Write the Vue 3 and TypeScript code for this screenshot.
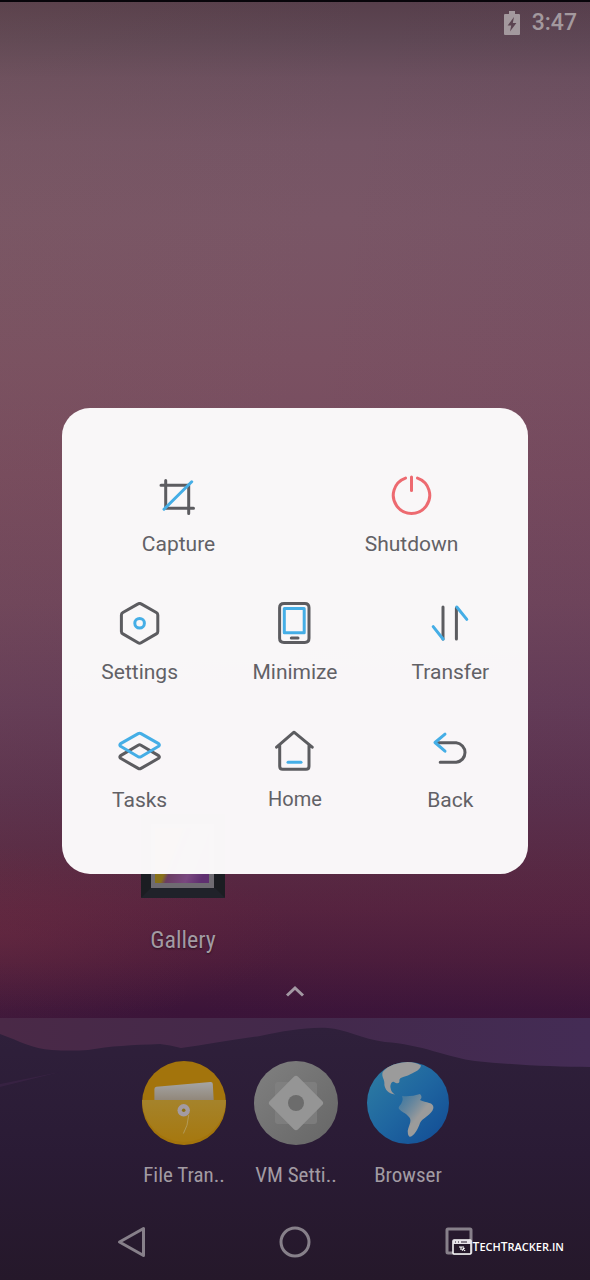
<script setup lang="ts">
interface Action {
  id: string
  label: string
}

const topActions: Action[] = [
  { id: 'capture', label: 'Capture' },
  { id: 'shutdown', label: 'Shutdown' },
]

const gridActions: Action[] = [
  { id: 'settings', label: 'Settings' },
  { id: 'minimize', label: 'Minimize' },
  { id: 'transfer', label: 'Transfer' },
  { id: 'tasks', label: 'Tasks' },
  { id: 'home', label: 'Home' },
  { id: 'back', label: 'Back' },
]

interface Stroke {
  d: string
  tone: 'ink' | 'sky' | 'alert'
}

const strokes: Record<string, Stroke[]> = {
  capture: [
    { d: 'M8.7 6.5V34.3H36.5M4 11.3H31.7V39.5', tone: 'ink' },
    { d: 'M7 35.2L34.7 7.8', tone: 'sky' },
  ],
  shutdown: [
    { d: 'M27.5 4.1A18.2 18.2 0 1 1 15.5 4.1', tone: 'alert' },
    { d: 'M21.5 3V16.5', tone: 'alert' },
  ],
  settings: [
    { d: 'M20.1 1.9Q21.6 1 23.1 1.9L38.3 10.5Q39.8 11.4 39.8 13V29.4Q39.8 31 38.3 31.9L23.1 40.7Q21.6 41.6 20.1 40.7L4.9 31.9Q3.4 31 3.4 29.4V13Q3.4 11.4 4.9 10.5Z', tone: 'ink' },
    { d: 'M21.6 16.5a4.8 4.8 0 1 1 0 9.6a4.8 4.8 0 1 1 0-9.6Z', tone: 'sky' },
  ],
  minimize: [
    { d: 'M11 1.6H31.8Q36 1.6 36 5.8V36.2Q36 40.4 31.8 40.4H11Q6.6 40.4 6.6 36.2V5.8Q6.6 1.6 11 1.6Z', tone: 'ink' },
    { d: 'M11.3 6.6H31.2V30.8H11.3Z', tone: 'sky' },
    { d: 'M18.3 36H25', tone: 'ink' },
  ],
  transfer: [
    { d: 'M15 5V37M28.4 6V37', tone: 'ink' },
    { d: 'M5.2 24.6L15.2 37.2M28.8 5L38.8 17.4', tone: 'sky' },
  ],
  tasks: [
    { d: 'M20.2 15.2Q21.6 14.4 23 15.2L40.6 25.6Q42.2 27 40.6 28.3L23 38.4Q21.6 39.2 20.2 38.4L2.6 28.3Q1 27 2.6 25.6Z', tone: 'ink' },
    { d: 'M20.2 3.6Q21.6 2.8 23 3.6L40.6 13.6Q42.2 15 40.6 16.3L23 26.7Q21.6 27.5 20.2 26.7L2.6 16.3Q1 15 2.6 13.6Z', tone: 'sky' },
  ],
  home: [
    { d: 'M3.6 17.2L21 2.2L39.2 17.2M6.7 15V36.3Q6.7 39.3 9.7 39.3H33Q36 39.3 36 36.3V15', tone: 'ink' },
    { d: 'M15 32.3H28', tone: 'sky' },
  ],
  back: [
    { d: 'M9 12.8H28.2A9.8 9.8 0 0 1 28.2 32.3H12.2', tone: 'ink' },
    { d: 'M17 4.2L7 12.5L17 21.2', tone: 'sky' },
  ],
}

const dockApps: Action[] = [
  { id: 'files', label: 'File Tran..' },
  { id: 'vm', label: 'VM Setti..' },
  { id: 'browser', label: 'Browser' },
]
</script>

<template>
  <div class="screen">
    <header class="status">
      <svg class="battery" viewBox="0 0 16 24" aria-label="Charging">
        <path fill-rule="evenodd" d="M5 0H11V3H15Q16 3 16 4V23Q16 24 15 24H1Q0 24 0 23V4Q0 3 1 3H5ZM10 6L3.600 14.600H7.200L6 20.500L12.400 12H8.800Z" />
      </svg>
      <time class="clock">3:47</time>
    </header>

    <main class="workspace">
      <a class="app gallery" href="#gallery">
        <svg class="app-icon" viewBox="0 0 84 84" aria-hidden="true">
          <defs>
            <linearGradient id="photo" x1="0" y1=".2" x2="1" y2=".6">
              <stop offset="0" stop-color="#8a7414" />
              <stop offset=".36" stop-color="#87701a" />
              <stop offset=".44" stop-color="#6a3d62" />
              <stop offset=".75" stop-color="#79477f" />
              <stop offset="1" stop-color="#5f2f70" />
            </linearGradient>
          </defs>
          <rect width="84" height="84" rx="1" fill="#1b1d22" />
          <path d="M0 84L10 74H74L84 84Z" fill="#20222a" />
          <rect x="10" y="10" width="63" height="64" fill="#6f6b72" />
          <rect x="14" y="14" width="54" height="55" fill="url(#photo)" />
        </svg>
        <span class="app-label">Gallery</span>
      </a>
      <button class="drawer" aria-label="All apps">
        <svg viewBox="0 0 24 12"><path d="M4 10.500L12 3L20 10.500" /></svg>
      </button>
    </main>

    <footer class="bottom">
      <svg class="hills" viewBox="0 0 590 262" preserveAspectRatio="none" aria-hidden="true">
        <defs>
          <linearGradient id="land" x1="0" y1="0" x2="0" y2="1">
            <stop offset="0" stop-color="#2f203b" />
            <stop offset=".5" stop-color="#2a1b35" />
            <stop offset="1" stop-color="#25182a" />
          </linearGradient>
        </defs>
        <path fill="url(#land)" d="M0 16C20 23 32 31 52 32Q70 33 88 32C110 28 132 27 160 26Q170 27 181 30C205 27 230 22 260 18C285 13 305 9 328 10C345 11 362 21 385 24C420 26 450 40 475 43C515 47 555 49 590 49V262H0Z" />
        <path fill="#3d2549" opacity=".6" d="M0 66L60 54L0 69Z" />
      </svg>
      <nav class="dock" aria-label="Favourite apps">
        <a v-for="app in dockApps" :key="app.id" class="app" :href="`#${app.id}`">
          <svg v-if="app.id === 'files'" class="app-icon" viewBox="0 0 84 84" aria-hidden="true">
            <defs>
              <linearGradient id="flap" x1="0" y1="0" x2="0" y2="1">
                <stop offset="0" stop-color="#a5832b" />
                <stop offset="1" stop-color="#a6780f" />
              </linearGradient>
              <linearGradient id="sheet" x1="0" y1="0" x2="0" y2="1">
                <stop offset="0" stop-color="#a5a5a5" />
                <stop offset="1" stop-color="#91877a" />
              </linearGradient>
            </defs>
            <circle cx="42" cy="42" r="42" fill="#a3740c" />
            <path fill="url(#sheet)" d="M12.400 28Q12.400 26 14.400 25.800L68.500 21Q70.700 20.800 70.800 23L71.700 39H12.400Z" />
            <path fill="url(#flap)" d="M0 39H84A42 42 0 0 1 0 39Z" />
            <path d="M46.700 54Q46 65 41.400 72.500" fill="none" stroke="#b39a58" stroke-width="1" />
            <circle cx="41.700" cy="49.300" r="6.200" fill="#a39ba3" />
            <circle cx="41.700" cy="49.300" r="1.800" fill="#8b7015" />
          </svg>
          <svg v-else-if="app.id === 'vm'" class="app-icon" viewBox="0 0 84 84" aria-hidden="true">
            <defs>
              <linearGradient id="steel" x1="0" y1="0" x2="1" y2="1">
                <stop offset="0" stop-color="#808080" />
                <stop offset="1" stop-color="#666666" />
              </linearGradient>
            </defs>
            <circle cx="42" cy="42" r="42" fill="url(#steel)" />
            <rect x="21" y="21" width="42" height="42" rx="3" fill="#828282" opacity=".75" />
            <rect x="22" y="22" width="40" height="40" rx="3" transform="rotate(45 42 42)" fill="#959595" />
            <circle cx="42" cy="42" r="8" fill="#6c6c6c" />
          </svg>
          <svg v-else class="app-icon" viewBox="0 0 84 84" aria-hidden="true">
            <defs>
              <linearGradient id="ocean" x1="0" y1="0" x2="1" y2="1">
                <stop offset="0" stop-color="#2f7fa3" />
                <stop offset=".5" stop-color="#1f66a0" />
                <stop offset="1" stop-color="#114a94" />
              </linearGradient>
              <linearGradient id="coast" x1="0" y1="0" x2="1" y2="1">
                <stop offset="0" stop-color="#4c7fa0" stop-opacity=".6" />
                <stop offset=".55" stop-color="#9b9b9b" />
              </linearGradient>
            </defs>
            <circle cx="42" cy="42" r="41" fill="url(#ocean)" />
            <path fill="#9b9b9b" d="M16.700 11C20 7 26 2 41.700 1Q50 1 55 4.500C54 10 46 12 43 14C38 16 34 16 33.400 19C34 23 31 23 28 21C25 20 24 25 24.600 27Q25 31 29 33.500C22 33 19 28 18.400 24C19 18 15 16 16.700 11Z" />
            <path fill="url(#coast)" d="M36 35Q45 36 54 33Q57 36 54 39C60 42 68 41 67.400 47C66 54 56 57 54 62C52 68 49 73 46 75Q42 78 41.700 70C43 63 47 59 42 55C39 51 30 49 33.400 45Q38 40 36 35Z" />
          </svg>
          <span class="app-label">{{ app.label }}</span>
        </a>
      </nav>
      <nav class="navbar" aria-label="System">
        <button aria-label="Back"><svg viewBox="0 0 34 34"><path d="M28.500 3.500V30.500L4.500 17Z" /></svg></button>
        <button aria-label="Home"><svg viewBox="0 0 34 34"><circle cx="17" cy="17" r="14" /></svg></button>
        <button aria-label="Recent apps"><svg viewBox="0 0 34 34"><rect x="6" y="4" width="24" height="24" rx="1" /></svg></button>
      </nav>
    </footer>

    <div class="overlay">
      <section class="panel" role="dialog" aria-label="Virtual machine menu">
        <div class="row two">
          <button v-for="a in topActions" :key="a.id" class="action">
            <svg class="glyph" viewBox="0 0 44 44" aria-hidden="true">
              <path v-for="(s, i) in strokes[a.id]" :key="i" :d="s.d" :class="s.tone" />
            </svg>
            <span>{{ a.label }}</span>
          </button>
        </div>
        <div class="row three">
          <button v-for="a in gridActions" :key="a.id" class="action" :class="a.id">
            <svg class="glyph" viewBox="0 0 44 44" aria-hidden="true">
              <path v-for="(s, i) in strokes[a.id]" :key="i" :d="s.d" :class="s.tone" />
            </svg>
            <span>{{ a.label }}</span>
          </button>
        </div>
      </section>
    </div>

    <div class="watermark">
      <svg viewBox="0 0 20 16" aria-hidden="true">
        <rect x="1" y="1" width="18" height="14" rx="1" fill="#25182a" stroke="#fff" stroke-width="1.500" />
        <path d="M1 1H19V5H1Z" fill="#e8e4ea" />
        <path d="M3 3H4M6 3H7M9 3H15" stroke="#25182a" stroke-width="1" />
        <path d="M7 8H12M9 8V11M11 9L13 12M10 11.500L12.500 9" stroke="#fff" stroke-width="1.200" fill="none" />
      </svg>
      <span class="brand"><b>T</b>ech<b>T</b>racker.in</span>
    </div>
  </div>
</template>

<style>
html,
body {
  background: #25182a;
}
</style>

<style scoped>
.screen {
  position: relative;
  display: flex;
  flex-direction: column;
  min-height: 100vh;
  box-sizing: border-box;
  border-top: 2px solid #08050a;
  font-family: Roboto, "Liberation Sans", sans-serif;
  background:
    radial-gradient(ellipse 50% 7% at 0 73%, rgba(125, 45, 65, 0.3), rgba(125, 45, 65, 0)),
    linear-gradient(100deg, rgba(128, 92, 86, 0.12), rgba(110, 70, 85, 0) 45%, rgba(80, 45, 90, 0.08)),
    linear-gradient(
      #573f4b 0,
      #5f4855 3%,
      #6c505f 6%,
      #755565 11%,
      #795666 17%,
      #7a5162 28%,
      #774b5e 37%,
      #6f455b 47%,
      #643c57 55%,
      #5b314d 62%,
      #582842 68%,
      #56233f 71%,
      #4b1c3b 75%,
      #3b1439 79%,
      #351238 100%
    );
}

button {
  padding: 0;
  border: 0;
  background: none;
  font: inherit;
  color: inherit;
}

a {
  color: inherit;
  text-decoration: none;
}

svg {
  display: block;
}

.status {
  display: flex;
  justify-content: flex-end;
  align-items: center;
  gap: 12px;
  height: 42px;
  padding: 0 13px;
  color: #a3999e;
}

.battery {
  width: 16px;
  height: 24px;
  fill: currentColor;
}

.clock {
  font-size: 23px;
  font-weight: 500;
  line-height: 28px;
}

.workspace {
  flex: 1;
  display: grid;
  grid-template-columns: repeat(5, 1fr);
  align-content: end;
  row-gap: 32px;
  padding: 0 15px 21px;
}

.app {
  display: flex;
  flex-direction: column;
  align-items: center;
  gap: 17px;
  color: #a29ba3;
}

.gallery {
  grid-column: 2;
  gap: 29px;
}

.app-icon {
  width: 84px;
  height: 84px;
}

.app-label {
  font-family: "Roboto Condensed", "Liberation Sans Narrow", Roboto, sans-serif;
  font-size: 21px;
  line-height: 26px;
  white-space: nowrap;
}

.gallery .app-label {
  font-size: 24px;
  text-shadow: 0 1px 2px rgba(0, 0, 0, 0.5);
}

.drawer {
  grid-column: 1 / -1;
  justify-self: center;
}

.drawer svg {
  width: 24px;
  height: 12px;
  fill: none;
  stroke: #a398a3;
  stroke-width: 3;
}

.bottom {
  position: relative;
  background: linear-gradient(90deg, #4a2947, #43294b 50%, #442c55);
}

.hills {
  position: absolute;
  inset: 0;
  width: 100%;
  height: 100%;
}

.dock {
  position: relative;
  display: grid;
  grid-template-columns: repeat(5, 1fr);
  padding: 43px 14px 16px 16px;
}

.dock .app:first-child {
  grid-column: 2;
}

.navbar {
  position: relative;
  display: flex;
  height: 76px;
  padding: 0 50px;
}

.navbar button {
  flex: 1;
  display: grid;
  place-items: center;
}

.navbar svg {
  width: 34px;
  height: 34px;
  fill: none;
  stroke: #87808a;
  stroke-width: 3;
  stroke-linejoin: round;
}

.overlay {
  position: absolute;
  inset: 0;
  display: grid;
  align-items: center;
  padding: 0 62px;
}

.panel {
  display: flex;
  flex-direction: column;
  gap: 44px;
  padding: 66px 0 60px;
  border-radius: 28px;
  background: rgba(251, 249, 250, 0.99);
}

.row {
  display: grid;
  row-gap: 44px;
}

.two {
  grid-template-columns: repeat(2, 1fr);
}

.three {
  grid-template-columns: repeat(3, 1fr);
}

.action {
  display: flex;
  flex-direction: column;
  align-items: center;
  gap: 12px;
  color: #626166;
  font-size: 21px;
  line-height: 28px;
}

.home {
  font-size: 20px;
  line-height: 26px;
}

.glyph {
  width: 44px;
  height: 44px;
  fill: none;
  stroke-width: 3;
  stroke-linecap: round;
  stroke-linejoin: round;
}

.ink {
  stroke: #5c5c60;
}

.sky {
  stroke: #45aee6;
}

.alert {
  stroke: #ed6a70;
}

.watermark {
  position: absolute;
  right: 26px;
  bottom: 25px;
  display: flex;
  align-items: center;
  gap: 1px;
  color: #fff;
}

.watermark svg {
  width: 20px;
  height: 16px;
}

.brand {
  font-family: "Open Sans", Lato, sans-serif;
  font-size: 11px;
  font-weight: 600;
  line-height: 16px;
  text-transform: uppercase;
}

.brand b {
  font-size: 12px;
  font-weight: 600;
}
</style>
